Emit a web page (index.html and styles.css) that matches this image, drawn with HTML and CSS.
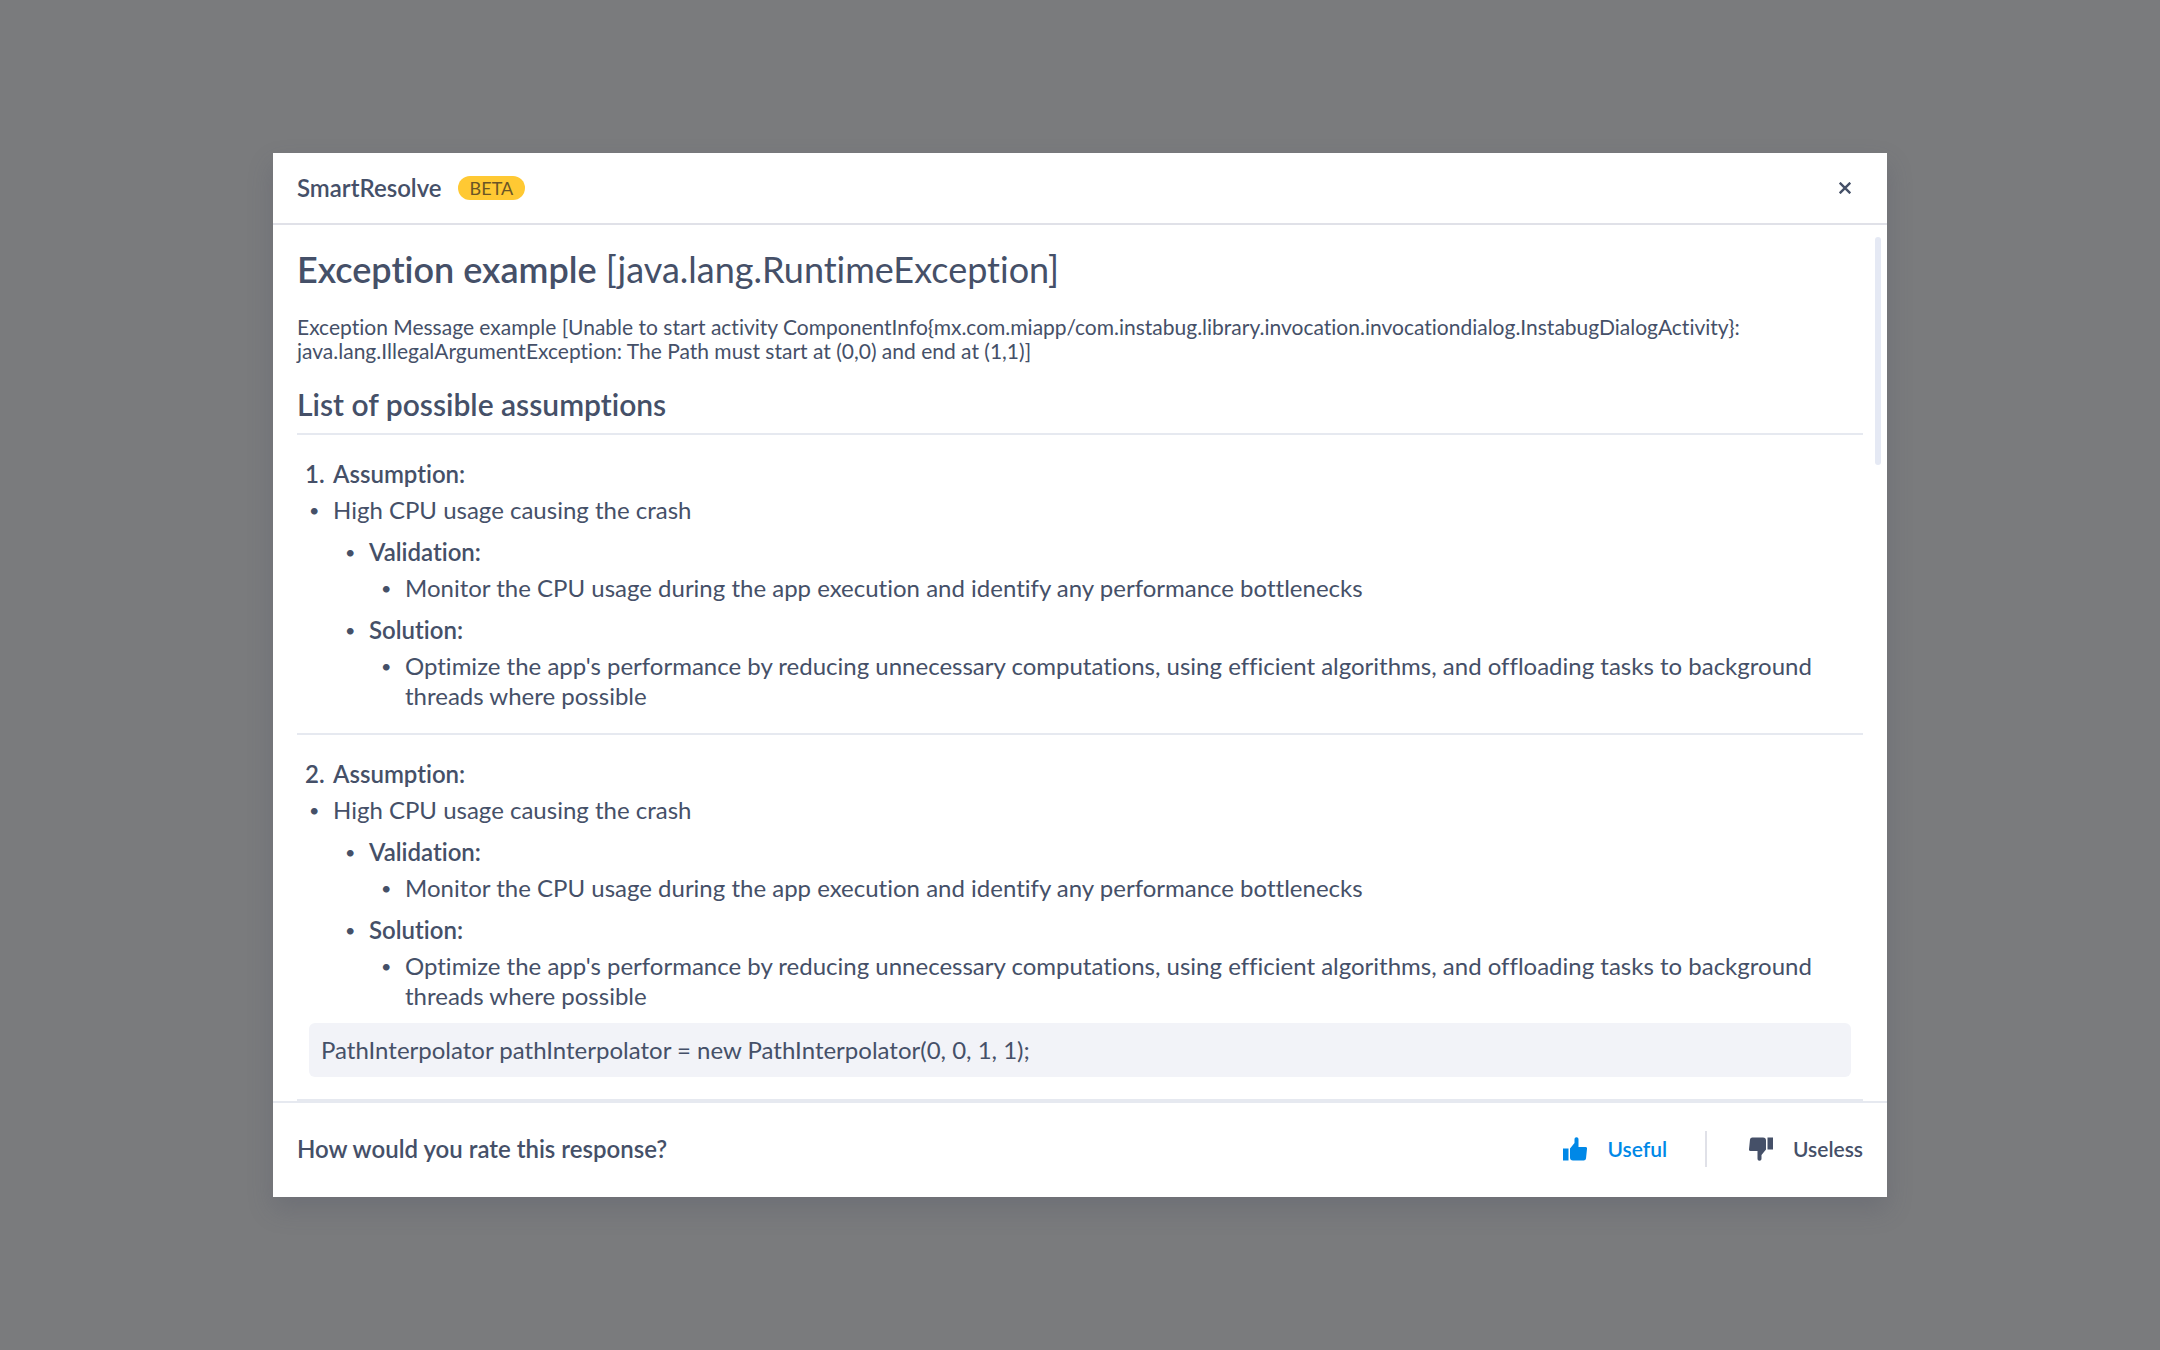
FILE: index.html
```html
<!DOCTYPE html>
<html lang="en">
<head>
  <meta charset="UTF-8">
  <title>SmartResolve</title>
  <meta name="viewport" content="width=device-width, initial-scale=1.0">
  <link rel="stylesheet" href="styles.css">
</head>
<body>

  <div class="modal" role="dialog" aria-labelledby="modalTitle">

    <!-- Header -->
    <header class="modal-header">
      <h2 class="modal-title" id="modalTitle">SmartResolve</h2>
      <span class="badge">BETA</span>
      <button type="button" class="close-btn" aria-label="Close">
        <svg width="12" height="12" viewBox="0 0 12 12" fill="none" stroke="currentColor" stroke-width="2.4">
          <path d="M.7.7l10.600 10.600M11.300.7L.7 11.300"/>
        </svg>
      </button>
    </header>

    <!-- Response -->
    <main class="modal-body">
      <h1 class="exception"><strong>Exception example</strong> [java.lang.RuntimeException]</h1>
      <p class="message">Exception Message example [Unable to start activity ComponentInfo{mx.com.miapp/com.instabug.library.invocation.invocationdialog.InstabugDialogActivity}:<br>java.lang.IllegalArgumentException: The Path must start at (0,0) and end at (1,1)]</p>
      <h2 class="list-title">List of possible assumptions</h2>

      <section class="assumption">
        <h3 class="assumption-title"><span class="number">1.</span>Assumption:</h3>
        <ul class="list">
          <li>High CPU usage causing the crash</li>
        </ul>
        <ul class="list steps">
          <li>
            <div>
              <strong>Validation:</strong>
              <ul class="list">
                <li>Monitor the CPU usage during the app execution and identify any performance bottlenecks</li>
              </ul>
            </div>
          </li>
          <li>
            <div>
              <strong>Solution:</strong>
              <ul class="list">
                <li>Optimize the app's performance by reducing unnecessary computations, using efficient algorithms, and offloading tasks to background threads where possible</li>
              </ul>
            </div>
          </li>
        </ul>
      </section>

      <section class="assumption">
        <h3 class="assumption-title"><span class="number">2.</span>Assumption:</h3>
        <ul class="list">
          <li>High CPU usage causing the crash</li>
        </ul>
        <ul class="list steps">
          <li>
            <div>
              <strong>Validation:</strong>
              <ul class="list">
                <li>Monitor the CPU usage during the app execution and identify any performance bottlenecks</li>
              </ul>
            </div>
          </li>
          <li>
            <div>
              <strong>Solution:</strong>
              <ul class="list">
                <li>Optimize the app's performance by reducing unnecessary computations, using efficient algorithms, and offloading tasks to background threads where possible</li>
              </ul>
            </div>
          </li>
        </ul>
        <pre class="code"><code>PathInterpolator pathInterpolator = new PathInterpolator(0, 0, 1, 1);</code></pre>
      </section>

      <div class="scroll-thumb"></div>
    </main>

    <!-- Rating -->
    <footer class="modal-footer">
      <p class="question">How would you rate this response?</p>
      <button type="button" class="rate-btn active">
        <svg width="24" height="24" viewBox="0 0 24 24" fill="currentColor">
          <path d="M0 11.5h5.5v12H0zM7 11.5L11.500 6V2.500C11.500 1 12.300.300 13.500.300S15.500 1 15.500 2.500V10H22.500Q24.200 10 24 11.700L23 21.500Q22.700 23.500 20.700 23.500H10Q7 23.500 7 20.500z"/>
        </svg>
        Useful
      </button>
      <button type="button" class="rate-btn">
        <svg width="24" height="24" viewBox="0 0 24 24" fill="currentColor">
          <path d="M24 12.500h-5.500V.500H24zM17 12.500L12.500 18V21.500C12.500 23 11.700 23.700 10.500 23.700S8.500 23 8.500 21.500V14H1.500Q-.200 14 0 12.300L1 2.500Q1.300.500 3.300.500H14Q17 .500 17 3.500z"/>
        </svg>
        Useless
      </button>
    </footer>

  </div>

</body>
</html>
```
FILE: styles.css
```css
:root {
  --backdrop: #7a7b7d;
  --text: #455068;
  --line: #e6e9f0;
  --accent: #0088e7;
  --badge: #ffc933;
}

*,
*::before {
  box-sizing: border-box;
  margin: 0;
  padding: 0;
}

body {
  font-family: Lato, 'Liberation Sans', sans-serif;
  font-size: 24px;
  line-height: 30px;
  font-variant-ligatures: none;
  color: var(--text);
  background: var(--backdrop);
  min-height: 100vh;
  padding: 24px;
  display: flex;
  align-items: center;
  justify-content: center;
}

strong {
  font-weight: 600;
}

button {
  font: inherit;
  color: inherit;
  background: none;
  border: none;
  cursor: pointer;
}

svg {
  display: block;
}

.modal {
  width: 100%;
  max-width: 1614px;
  background: #fff;
  box-shadow: 0 12px 24px rgba(70, 75, 95, 0.24);
}

.modal-header {
  display: flex;
  align-items: center;
  padding: 20px 24px;
  border-bottom: 2px solid #e0e1e8;
}

.modal-title {
  font-size: 24px;
  font-weight: 600;
}

.badge {
  margin-left: 16px;
  padding: 0 12px;
  border-radius: 12px;
  font-size: 18px;
  line-height: 24px;
  color: #6b5526;
  background: var(--badge);
}

.close-btn {
  margin-left: auto;
  padding: 9px 12px;
}

.modal-body {
  position: relative;
  padding: 22px 24px 0;
}

.exception {
  font-size: 36px;
  font-weight: 400;
  line-height: 44px;
}

.message {
  margin: 24px 0;
  font-size: 21px;
  line-height: 24px;
}

.list-title {
  padding-bottom: 12px;
  border-bottom: 2px solid var(--line);
  font-size: 30px;
  font-weight: 600;
  line-height: 34px;
}

.assumption {
  padding: 24px 0 22px;
  border-bottom: 2px solid var(--line);
}

.assumption-title {
  display: flex;
  margin-bottom: 6px;
  font-size: 24px;
  font-weight: 600;
}

.number {
  width: 36px;
  padding-left: 8px;
}

.list {
  list-style: none;
}

.list li {
  display: flex;
}

.list li::before {
  content: "•";
  flex: none;
  width: 36px;
  padding-left: 12px;
  font-size: 18px;
}

.list .list {
  margin-top: 6px;
}

.steps {
  padding-left: 36px;
}

.steps > li {
  margin-top: 12px;
}

.code {
  margin: 12px 12px 0;
  padding: 12px;
  border-radius: 6px;
  font-family: inherit;
  background: #f2f3f8;
}

.code code {
  font: inherit;
}

.scroll-thumb {
  position: absolute;
  top: 12px;
  right: 6px;
  width: 6px;
  height: 228px;
  border-radius: 3px;
  background: #e5e9f4;
}

.modal-footer {
  display: flex;
  align-items: center;
  padding: 28px 24px 30px;
  border-top: 2px solid var(--line);
}

.question {
  margin-right: auto;
  font-weight: 600;
}

.rate-btn {
  display: flex;
  align-items: center;
  gap: 20px;
  height: 36px;
  font-size: 21px;
  font-weight: 600;
}

.rate-btn + .rate-btn {
  margin-left: 38px;
  padding-left: 42px;
  border-left: 2px solid #e0e1e8;
}

.rate-btn.active {
  color: var(--accent);
}
```
